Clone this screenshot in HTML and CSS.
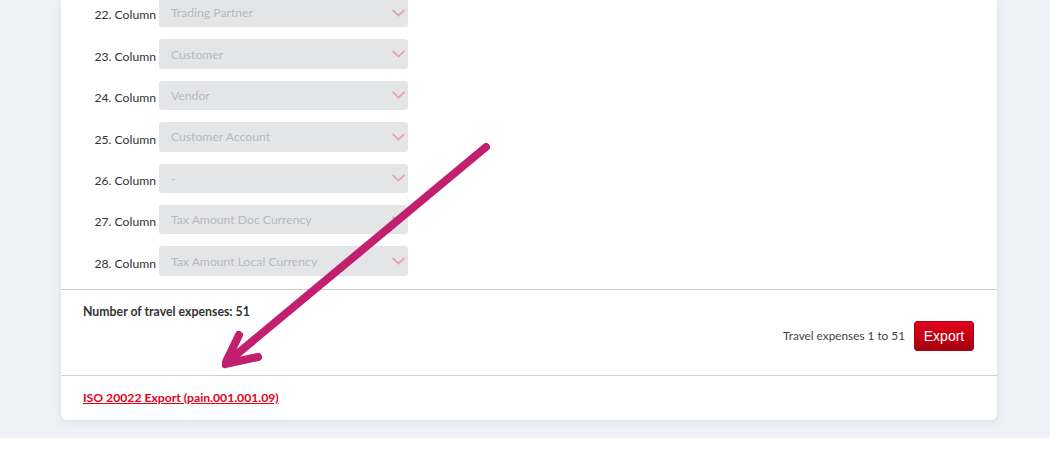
FILE: index.html
```html
<!DOCTYPE html>
<html lang="en">
<head>
  <meta charset="UTF-8" />
  <title>Travel expenses export</title>
  <link rel="stylesheet" href="styles.css">
</head>
<body>
  <div class="page">
    <div class="card">
      <div class="columns">
        <div class="col-row">
          <label>22. Column</label>
          <div class="select"><span>Trading Partner</span><svg class="chev" viewBox="0 0 12 7"><path d="M1 1l5 5 5-5"/></svg></div>
        </div>
        <div class="col-row">
          <label>23. Column</label>
          <div class="select"><span>Customer</span><svg class="chev" viewBox="0 0 12 7"><path d="M1 1l5 5 5-5"/></svg></div>
        </div>
        <div class="col-row">
          <label>24. Column</label>
          <div class="select"><span>Vendor</span><svg class="chev" viewBox="0 0 12 7"><path d="M1 1l5 5 5-5"/></svg></div>
        </div>
        <div class="col-row">
          <label>25. Column</label>
          <div class="select"><span>Customer Account</span><svg class="chev" viewBox="0 0 12 7"><path d="M1 1l5 5 5-5"/></svg></div>
        </div>
        <div class="col-row">
          <label>26. Column</label>
          <div class="select"><span>-</span><svg class="chev" viewBox="0 0 12 7"><path d="M1 1l5 5 5-5"/></svg></div>
        </div>
        <div class="col-row">
          <label>27. Column</label>
          <div class="select"><span>Tax Amount Doc Currency</span><svg class="chev" viewBox="0 0 12 7"><path d="M1 1l5 5 5-5"/></svg></div>
        </div>
        <div class="col-row">
          <label>28. Column</label>
          <div class="select"><span>Tax Amount Local Currency</span><svg class="chev" viewBox="0 0 12 7"><path d="M1 1l5 5 5-5"/></svg></div>
        </div>
      </div>

      <div class="summary">
        <div class="count">Number of travel expenses: 51</div>
        <div class="actions">
          <span class="range">Travel expenses 1 to 51</span>
          <button class="btn-export">Export</button>
        </div>
      </div>

      <div class="iso">
        <a href="#">ISO 20022 Export (pain.001.001.09)</a>
      </div>

      <!-- hint arrow pointing at the ISO export link -->
      <svg class="hint-arrow" viewBox="0 0 300 260" width="300" height="260">
        <path d="M264 28 L3 245 M3 245 L17 216 M3 245 L36 238" />
      </svg>
    </div>
  </div>
</body>
</html>
```

FILE: styles.css
```css
body { margin: 0; background: #fff; font-family: Lato, "Open Sans", sans-serif; color: #333; }
.page { background: #eef2f7; padding: 0 0 18px 61px; overflow: hidden; }
.card { position: relative; width: 936px; background: #fff; border-radius: 0 0 6px 6px; box-shadow: 0 2px 8px rgba(40, 60, 90, 0.10); }

.columns { display: flex; flex-direction: column; gap: 12px; margin-top: -2px; padding-bottom: 13px; }
.col-row { display: grid; grid-template-columns: 95px 249px; column-gap: 3px; height: 29.4px; }
.col-row label { font-size: 12.2px; text-align: right; align-self: end; line-height: 14px; margin-bottom: 5px; }
.select { display: flex; align-items: center; justify-content: space-between; background: #e4e5e7; border-radius: 3px; padding: 0 3px 0 12px; font-size: 12.2px; color: #b8b9bc; }
.chev { width: 13px; height: 8px; fill: none; stroke: #e6a3b2; stroke-width: 1.6; stroke-linecap: round; stroke-linejoin: round; }

.summary { border-top: 1px solid #cfcfcf; padding: 14px 23px 24px 22px; }
.count { font-size: 12.3px; font-weight: 700; line-height: 16px; }
.actions { display: flex; justify-content: flex-end; align-items: center; gap: 9px; margin-top: 1px; }
.range { font-size: 11.8px; color: #444; }
.btn-export { font-family: "Liberation Sans", Arial, sans-serif; font-size: 14px; color: #fff; background: linear-gradient(#e2001a, #a5000f); border: 1px solid #b0000f; border-radius: 3px; width: 60px; height: 30px; padding: 0; }

.iso { border-top: 1px solid #cfcfcf; padding: 10px 22px 14px; }
.iso a { font-size: 12.2px; font-weight: 700; color: #e2001a; line-height: 16px; }

.hint-arrow { position: absolute; left: 161px; top: 121px; fill: none; stroke: #c2206e; stroke-width: 8; stroke-linecap: round; stroke-linejoin: round; }
```
